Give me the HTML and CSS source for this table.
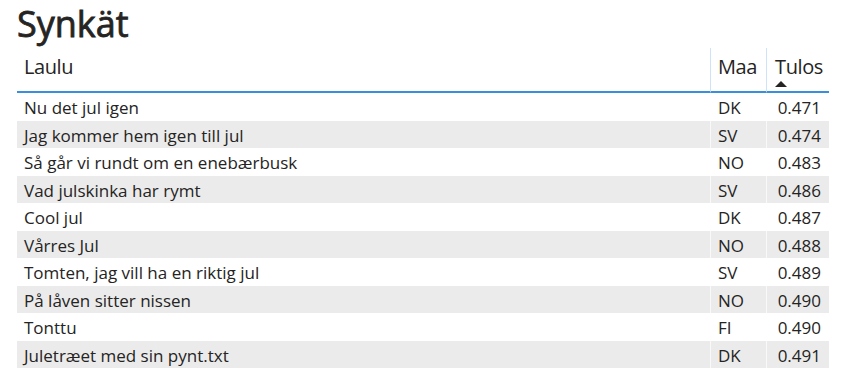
FILE: index.html
```html
<!DOCTYPE html>
<html lang="fi">
<head>
<meta charset="utf-8">
<title>Synkät</title>
<link rel="stylesheet" href="styles.css">
</head>
<body>
<div class="visual">
  <h1 class="title">Synkät</h1>
  <div class="table">
    <div class="hdr c1">Laulu</div>
    <div class="hdr c2">Maa</div>
    <div class="hdr c3">Tulos<span class="sort"></span></div>

    <div class="cell c1">Nu det jul igen</div><div class="cell c2">DK</div><div class="cell c3">0.471</div>
    <div class="cell c1 alt">Jag kommer hem igen till jul</div><div class="cell c2 alt">SV</div><div class="cell c3 alt">0.474</div>
    <div class="cell c1">Så går vi rundt om en enebærbusk</div><div class="cell c2">NO</div><div class="cell c3">0.483</div>
    <div class="cell c1 alt">Vad julskinka har rymt</div><div class="cell c2 alt">SV</div><div class="cell c3 alt">0.486</div>
    <div class="cell c1">Cool jul</div><div class="cell c2">DK</div><div class="cell c3">0.487</div>
    <div class="cell c1 alt">Vårres Jul</div><div class="cell c2 alt">NO</div><div class="cell c3 alt">0.488</div>
    <div class="cell c1">Tomten, jag vill ha en riktig jul</div><div class="cell c2">SV</div><div class="cell c3">0.489</div>
    <div class="cell c1 alt">På låven sitter nissen</div><div class="cell c2 alt">NO</div><div class="cell c3 alt">0.490</div>
    <div class="cell c1">Tonttu</div><div class="cell c2">FI</div><div class="cell c3">0.490</div>
    <div class="cell c1 alt">Juletræet med sin pynt.txt</div><div class="cell c2 alt">DK</div><div class="cell c3 alt">0.491</div>
  </div>
</div>
</body>
</html>
```

FILE: styles.css
```css
html, body {
  margin: 0;
  padding: 0;
  background: #ffffff;
}
body {
  font-family: "Open Sans", "Noto Sans", sans-serif;
  color: #252423;
  overflow: hidden;
}
.visual {
  padding: 0 0 0 17px;
}
.title {
  margin: 0;
  font-family: "Open Sans", sans-serif;
  font-weight: 400;
  font-size: 36px;
  line-height: 48px;
  height: 48px;
  color: #252423;
  letter-spacing: 0;
  -webkit-text-stroke: 0.8px #252423;
}
.table {
  display: grid;
  grid-template-columns: 693px 56px 63px;
  grid-auto-rows: 27.5px;
  grid-template-rows: 45px;
  width: 812px;
}
.hdr {
  font-size: 20px;
  border-bottom: 2px solid #3a8fdc;
  padding: 6px 7px 0;
  line-height: 26px;
  position: relative;
  box-sizing: border-box;
  letter-spacing: -0.4px;
}
.hdr.c2, .hdr.c3 {
  border-left: 1px solid #cfe3f6;
}
.hdr.c3 {
  text-align: right;
  padding-right: 6px;
}
.sort {
  position: absolute;
  left: 8px;
  top: 33px;
  width: 0;
  height: 0;
  border-left: 6px solid transparent;
  border-right: 6px solid transparent;
  border-bottom: 6px solid #252423;
}
.cell {
  box-sizing: border-box;
  font-size: 17px;
  line-height: 25.5px;
  padding: 2px 7px 0;
  white-space: nowrap;
}
.cell.c2, .cell.c3 {
  border-left: 1px solid rgba(255,255,255,0.7);
}
.cell.c3 {
  text-align: right;
  padding-right: 8px;
}
.alt {
  background: #ebebeb;
}
```
